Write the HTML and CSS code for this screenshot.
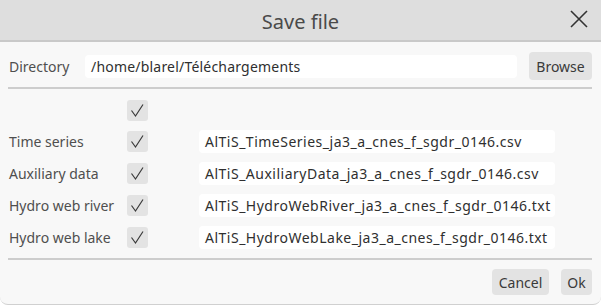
FILE: index.html
```html
<!DOCTYPE html>
<html>
<head>
<meta charset="utf-8">
<link rel="stylesheet" href="styles.css">
</head>
<body>
<div class="window">
  <header class="titlebar">
    <div class="title">Save file</div>
    <button class="close" aria-label="Close">
      <svg width="18" height="18" viewBox="0 0 18 18"><path d="M1 1 L17 17 M17 1 L1 17" stroke="#333" stroke-width="1.6" fill="none"/></svg>
    </button>
  </header>
  <main class="content">
    <div class="dir-row">
      <span class="label">Directory</span>
      <div class="field dir-field">/home/blarel/Téléchargements</div>
      <button class="btn browse">Browse</button>
    </div>
    <hr class="sep">
    <div class="grid">
      <span></span>
      <span class="check"><svg width="21" height="21" viewBox="0 0 21 21"><path d="M4.5 10.5 L8.5 16 L16 4.5" stroke="#3a3a3a" stroke-width="1.2" fill="none"/></svg></span>
      <span></span>

      <span class="label">Time series</span>
      <span class="check"><svg width="21" height="21" viewBox="0 0 21 21"><path d="M4.5 10.5 L8.5 16 L16 4.5" stroke="#3a3a3a" stroke-width="1.2" fill="none"/></svg></span>
      <div class="field file">AlTiS_TimeSeries_ja3_a_cnes_f_sgdr_0146.csv</div>

      <span class="label">Auxiliary data</span>
      <span class="check"><svg width="21" height="21" viewBox="0 0 21 21"><path d="M4.5 10.5 L8.5 16 L16 4.5" stroke="#3a3a3a" stroke-width="1.2" fill="none"/></svg></span>
      <div class="field file">AlTiS_AuxiliaryData_ja3_a_cnes_f_sgdr_0146.csv</div>

      <span class="label">Hydro web river</span>
      <span class="check"><svg width="21" height="21" viewBox="0 0 21 21"><path d="M4.5 10.5 L8.5 16 L16 4.5" stroke="#3a3a3a" stroke-width="1.2" fill="none"/></svg></span>
      <div class="field file">AlTiS_HydroWebRiver_ja3_a_cnes_f_sgdr_0146.txt</div>

      <span class="label">Hydro web lake</span>
      <span class="check"><svg width="21" height="21" viewBox="0 0 21 21"><path d="M4.5 10.5 L8.5 16 L16 4.5" stroke="#3a3a3a" stroke-width="1.2" fill="none"/></svg></span>
      <div class="field file">AlTiS_HydroWebLake_ja3_a_cnes_f_sgdr_0146.txt</div>
    </div>
    <hr class="sep sep2">
    <div class="actions">
      <button class="btn cancel">Cancel</button>
      <button class="btn ok">Ok</button>
    </div>
  </main>
</div>
</body>
</html>
```
FILE: styles.css
```css
* { box-sizing: border-box; }
html, body { margin: 0; padding: 0; background: #ffffff; }
body {
  font-family: "Noto Sans", "Open Sans", sans-serif;
  font-size: 14px;
  color: #4a4a4a;
}
.window {
  width: 601px;
  height: 305px;
  background: #f8f8f8;
  border-radius: 0 0 8px 8px;
  overflow: hidden;
  border-bottom: 1px solid #d0d0d0;
}
.titlebar {
  height: 42px;
  background: #dedede;
  border-bottom: 2px solid #c9c9c9;
  display: flex;
  align-items: center;
  justify-content: center;
  position: relative;
}
.title {
  font-size: 20px;
  color: #4a4a4a;
  padding-top: 2px;
}
.close {
  position: absolute;
  right: 13px;
  top: 10px;
  width: 18px;
  height: 18px;
  padding: 0;
  border: 0;
  background: none;
  display: flex;
}
.content {
  padding: 10px 9px 0 8px;
}
.dir-row {
  display: flex;
  align-items: center;
  height: 28px;
}
.label {
  color: #4f4f4f;
  padding-left: 1px;
}
.dir-row .label { width: 77px; }
.field {
  background: #ffffff;
  border-radius: 4px;
  height: 23px;
  line-height: 23px;
  padding: 0 6px;
  color: #2f2f2f;
  white-space: nowrap;
}
.dir-field { width: 432px; letter-spacing: 0.2px; }
.file { letter-spacing: 0.5px; }
.btn {
  font-family: inherit;
  font-size: 14px;
  color: #3a3a3a;
  background: #e3e3e3;
  border: 0;
  border-radius: 4px;
  padding: 0;
}
.browse { margin-left: 12px; width: 63px; height: 28px; }
.sep {
  border: 0;
  height: 2px;
  background: #cdcdcd;
  margin: 7px 0 0 0;
}
.grid {
  display: grid;
  grid-template-columns: 119px 72px 356px;
  grid-template-rows: 21px;
  grid-auto-rows: 23px;
  row-gap: 9px;
  margin-top: 11px;
  align-items: center;
}
.check {
  width: 21px;
  height: 21px;
  background: #e3e3e3;
  border-radius: 3px;
  display: flex;
}
.grid .field { width: 356px; }
.sep2 { margin-top: 9px; }
.actions {
  display: flex;
  justify-content: flex-end;
  gap: 12px;
  margin-top: 9px;
}
.cancel { width: 57px; height: 26px; }
.ok { width: 31px; height: 26px; }
```
